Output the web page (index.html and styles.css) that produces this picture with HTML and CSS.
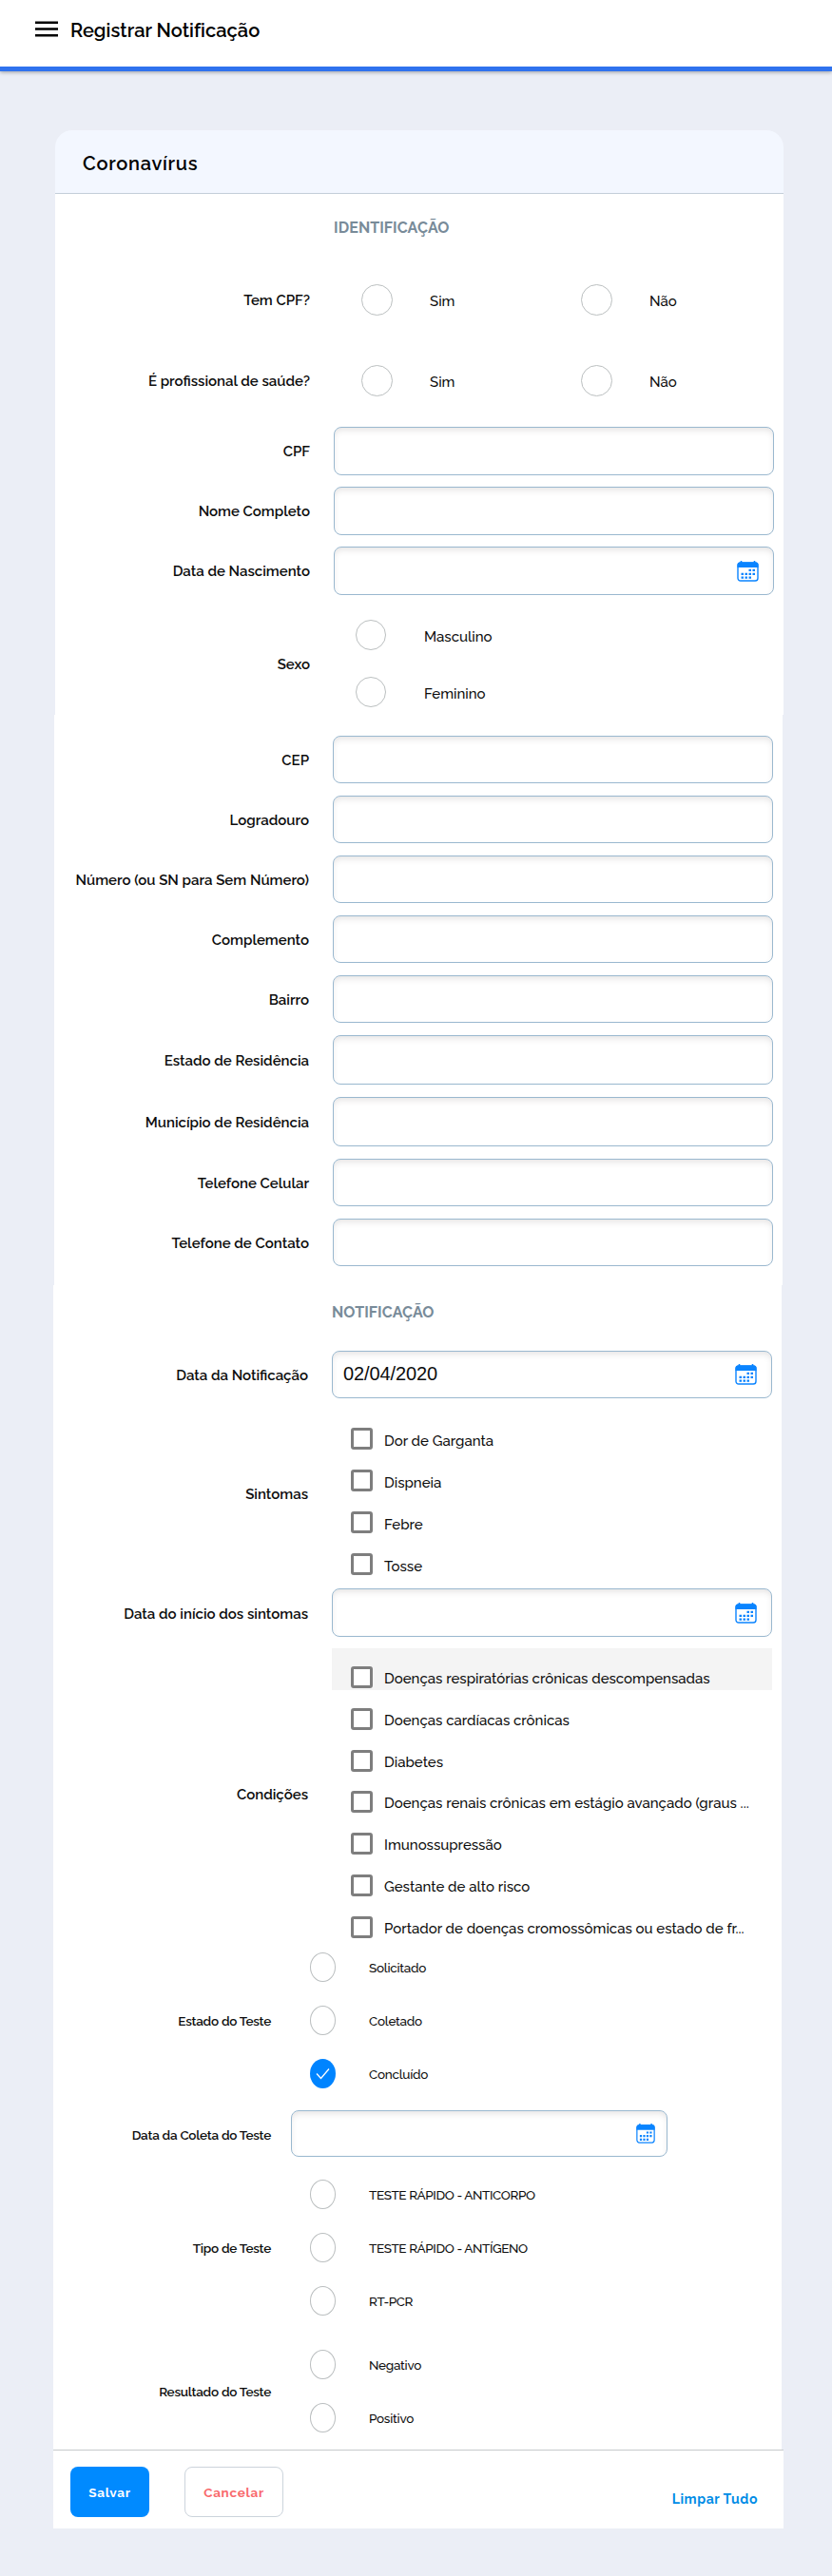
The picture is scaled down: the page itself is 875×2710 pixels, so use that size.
FILE: index.html
```
<!DOCTYPE html>
<html lang="pt-BR">
<head>
<meta charset="utf-8">
<title>Registrar Notificação</title>
<link rel="stylesheet" href="styles.css">
</head>
<body>
<svg class="defs" width="0" height="0" aria-hidden="true">
  <symbol id="calendar" viewBox="0 0 23 22">
    <path d="M4.5 0v3M18.5 0v3" stroke="#0a84ff" stroke-width="1.6"/>
    <rect x="1" y="2" width="21" height="19" rx="2.8" fill="#fff" stroke="#0a84ff" stroke-width="1.4"/>
    <path d="M.5 7V4q0-2.600 2.600-2.600h16.800q2.600 0 2.600 2.600v3z" fill="#0a84ff"/>
    <g fill="#0a84ff"><path d="M12.500 8.800h2.500v2.300h-2.500zM16.500 8.800H19v2.300h-2.500zM4.500 12.700H7V15H4.500zM8.500 12.700H11V15H8.500zM12.500 12.700H15V15h-2.500zM16.500 12.700H19V15h-2.500zM4.500 16.500H7v2.300H4.500zM8.500 16.500H11v2.300H8.500zM12.500 16.500H15v2.300h-2.500z"/></g>
  </symbol>
</svg>
<header class="topbar">
  <svg class="menu" viewBox="0 0 24 17"><path d="M0 1.800h24M0 8.500h24M0 15.300h24" stroke="#000" stroke-width="2.500"/></svg>
  <h1>Registrar Notificação</h1>
</header>
<main class="card">
  <h2 class="card-title">Coronavírus</h2>

  <section class="part part-person">
    <h3 class="ident">IDENTIFICAÇÃO</h3>
    <div class="yesno"><span class="label">Tem CPF?</span><div class="pair"><label><i class="radio"></i><span>Sim</span></label><label><i class="radio"></i><span>Não</span></label></div></div>
    <div class="yesno"><span class="label">É profissional de saúde?</span><div class="pair"><label><i class="radio"></i><span>Sim</span></label><label><i class="radio"></i><span>Não</span></label></div></div>
    <div class="fields">
      <div class="row"><span class="label">CPF</span><div class="input"></div></div>
      <div class="row"><span class="label">Nome Completo</span><div class="input"></div></div>
      <div class="row"><span class="label">Data de Nascimento</span><div class="input"><svg class="cal" viewBox="0 0 23 22"><use href="#calendar"/></svg></div></div>
    </div>
    <div class="row sex"><span class="label">Sexo</span><div class="options"><label><i class="radio"></i><span>Masculino</span></label><label><i class="radio"></i><span>Feminino</span></label></div></div>
  </section>

  <section class="part part-address">
    <div class="row"><span class="label">CEP</span><div class="input"></div></div>
    <div class="row"><span class="label">Logradouro</span><div class="input"></div></div>
    <div class="row"><span class="label">Número (ou SN para Sem Número)</span><div class="input"></div></div>
    <div class="row"><span class="label">Complemento</span><div class="input"></div></div>
    <div class="row"><span class="label">Bairro</span><div class="input"></div></div>
    <div class="row"><span class="label">Estado de Residência</span><div class="input tall"></div></div>
    <div class="row"><span class="label">Município de Residência</span><div class="input tall"></div></div>
    <div class="row"><span class="label">Telefone Celular</span><div class="input"></div></div>
    <div class="row"><span class="label">Telefone de Contato</span><div class="input"></div></div>
  </section>

  <section class="part part-notice">
    <h3 class="notif">NOTIFICAÇÃO</h3>
    <div class="row"><span class="label">Data da Notificação</span><div class="input short"><span class="value">02/04/2020</span><svg class="cal" viewBox="0 0 23 22"><use href="#calendar"/></svg></div></div>
    <div class="row"><span class="label">Sintomas</span><div class="checks">
      <label><i class="box"></i><span>Dor de Garganta</span></label>
      <label><i class="box"></i><span>Dispneia</span></label>
      <label><i class="box"></i><span>Febre</span></label>
      <label><i class="box"></i><span>Tosse</span></label>
    </div></div>
    <div class="row"><span class="label">Data do início dos sintomas</span><div class="input"><svg class="cal" viewBox="0 0 23 22"><use href="#calendar"/></svg></div></div>
    <div class="row"><span class="label">Condições</span><div class="checks conditions">
      <label class="hover"><i class="box"></i><span>Doenças respiratórias crônicas descompensadas</span></label>
      <label><i class="box"></i><span>Doenças cardíacas crônicas</span></label>
      <label><i class="box"></i><span>Diabetes</span></label>
      <label><i class="box"></i><span>Doenças renais crônicas em estágio avançado (graus ...</span></label>
      <label><i class="box"></i><span>Imunossupressão</span></label>
      <label><i class="box"></i><span>Gestante de alto risco</span></label>
      <label><i class="box"></i><span>Portador de doenças cromossômicas ou estado de fr...</span></label>
    </div></div>
  </section>

  <section class="part part-test">
    <div class="row"><span class="label">Estado do Teste</span><div class="options">
      <label><i class="radio"></i><span>Solicitado</span></label>
      <label><i class="radio"></i><span>Coletado</span></label>
      <label><i class="radio checked"><svg viewBox="0 0 27 30"><path d="M7 15.500l4.500 5L20 10.500" fill="none" stroke="#fff" stroke-width="1.300"/></svg></i><span>Concluído</span></label>
    </div></div>
    <div class="row"><span class="label">Data da Coleta do Teste</span><div class="input"><svg class="cal" viewBox="0 0 23 22" preserveAspectRatio="none"><use href="#calendar"/></svg></div></div>
    <div class="row"><span class="label">Tipo de Teste</span><div class="options caps">
      <label><i class="radio"></i><span>TESTE RÁPIDO - ANTICORPO</span></label>
      <label><i class="radio"></i><span>TESTE RÁPIDO - ANTÍGENO</span></label>
      <label><i class="radio"></i><span>RT-PCR</span></label>
    </div></div>
    <div class="row"><span class="label">Resultado do Teste</span><div class="options">
      <label><i class="radio"></i><span>Negativo</span></label>
      <label><i class="radio"></i><span>Positivo</span></label>
    </div></div>
  </section>

  <footer class="actions">
    <button class="save">Salvar</button>
    <button class="cancel">Cancelar</button>
    <a class="clear">Limpar Tudo</a>
  </footer>
</main>
</body>
</html>
```
FILE: styles.css
```
* { box-sizing: border-box; }
body {
  margin: 0;
  min-height: 2710px;
  background: #ebeef6;
  color: #0d0d0d;
  font: 500 15px/20px Raleway, Lato, sans-serif;
}
h1, h2, h3 { margin: 0; color: #000; }
.defs { display: block; width: 0; height: 0; }
.topbar {
  display: flex;
  height: 75px;
  padding: 20px 0 0 37px;
  background: #fff;
  border-bottom: 5px solid #2f72ee;
  box-shadow: 0 1px 4px rgba(0, 0, 0, .35);
}
.menu { width: 24px; height: 17px; margin: 2px 13px 0 0; }
h1 { font-size: 20px; line-height: 24px; font-weight: 600; letter-spacing: .05px; }
.card { width: 766px; margin: 62px 0 0 58px; }
.card-title {
  height: 67px;
  padding-left: 29px;
  background: #f3f7ff;
  border-bottom: 1px solid #c3ced9;
  border-radius: 18px 18px 0 0;
  font-size: 20px;
  line-height: 70px;
  font-weight: 600;
  letter-spacing: .75px;
}
h3 { height: 69px; margin-left: 293px; color: #788b99; font-size: 16px; line-height: 71px; font-weight: 700; letter-spacing: .08px; }
.part { width: 766px; background: #fff; }
.part-address { margin-left: -1px; }
.part-notice { margin-left: -2px; }
.part-test { margin-left: -2.500px; }
.row, .yesno { display: grid; grid-template-columns: 268px 463px; column-gap: 25px; align-items: center; }
.label { padding-top: 1px; text-align: right; font-weight: 600; white-space: nowrap; }
label { display: flex; align-items: center; white-space: nowrap; }
label span { padding-top: 2px; }
.yesno { height: 85px; }
.pair { display: grid; grid-template-columns: 231px 1fr; padding-left: 29px; }
.pair label { gap: 39px; }
.radio { flex: none; display: block; width: 33px; height: 33px; border: 1px solid #bbbfc0; border-radius: 50%; background: #fff; }
.fields { display: grid; gap: 12px; padding-top: 6px; }
.input {
  display: flex;
  align-items: center;
  justify-content: flex-end;
  height: 51px;
  padding: 0 15px 0 11px;
  border: 1px solid #9ab8cf;
  border-radius: 8px;
  background: #fff;
  box-shadow: inset 0 4px 7px -2px rgba(70, 55, 55, .15);
}
.cal { width: 23px; height: 22px; }
.value { margin: -2px auto 0 0; font: 20px/22px "Liberation Sans", sans-serif; letter-spacing: -.1px; }
.sex { height: 126px; padding-top: 12px; }
.sex .label { padding-top: 2px; }
.sex .options { padding-left: 23px; }
.sex .options label { height: 60px; gap: 40px; }
.sex .options span { padding-top: 3px; }
.sex .radio { width: 32px; height: 32px; }
.part-address { display: grid; gap: 13px; height: 600px; padding-top: 22px; align-content: start; }
.part-address .label { padding-top: 2px; }
.part-address .input { height: 50px; }
.part-address .input.tall { height: 52px; }
.part-notice { display: grid; gap: 12px; height: 689px; align-content: start; }
.part-notice h3 { height: 57px; line-height: 57px; }
.part-notice .label { padding-top: 2px; }
.part-notice .input.short { height: 50px; }
.checks label { align-items: flex-start; height: 44px; padding: 19px 0 0 20px; gap: 12px; }
.checks span { padding-top: 4px; }
.box { display: block; flex: none; width: 23px; height: 23px; border: 3px solid #7e7e7e; border-radius: 3px; background: #fff; }
.conditions label { height: 43.800px; }
.conditions span { padding-top: 3px; }
.hover { background: #f4f4f4; }
.part-test { display: grid; gap: 11px; height: 536px; align-content: start; font-size: 13.500px; letter-spacing: -.25px; }
.part-test .row { grid-template-columns: 229.500px 396px; column-gap: 21px; }
.part-test .label { padding-top: 2px; }
.part-test .input { height: 49px; padding-right: 12px; }
.part-test .cal { width: 20px; height: 21px; }
.part-test .options { padding-left: 20px; }
.part-test .options label { height: 56px; gap: 35px; }
.part-test .caps { letter-spacing: -.4px; }
.part-test .radio { width: 27px; height: 31px; }
.part-test .checked { border: 0; background: #0084ff; }
.checked svg { display: block; width: 27px; height: 30px; }
.actions {
  display: flex;
  height: 83px;
  margin-left: -2.500px;
  padding: 17px 27px 0 18.500px;
  background: #fff;
  border-top: 1px solid #c6c9cc;
  letter-spacing: .6px;
}
button { height: 53px; padding: 0; border: 0; border-radius: 8px; font: inherit; font-size: 13.500px; font-weight: 700; letter-spacing: .7px; }
.save { width: 83px; margin-right: 37px; background: #008aff; color: #fff; }
.cancel { width: 104px; border: 1px solid #ccd4dc; background: #fff; color: #f9696c; }
.clear { margin: 24px 0 0 auto; color: #008ce6; font-size: 14px; font-weight: 700; }
```
